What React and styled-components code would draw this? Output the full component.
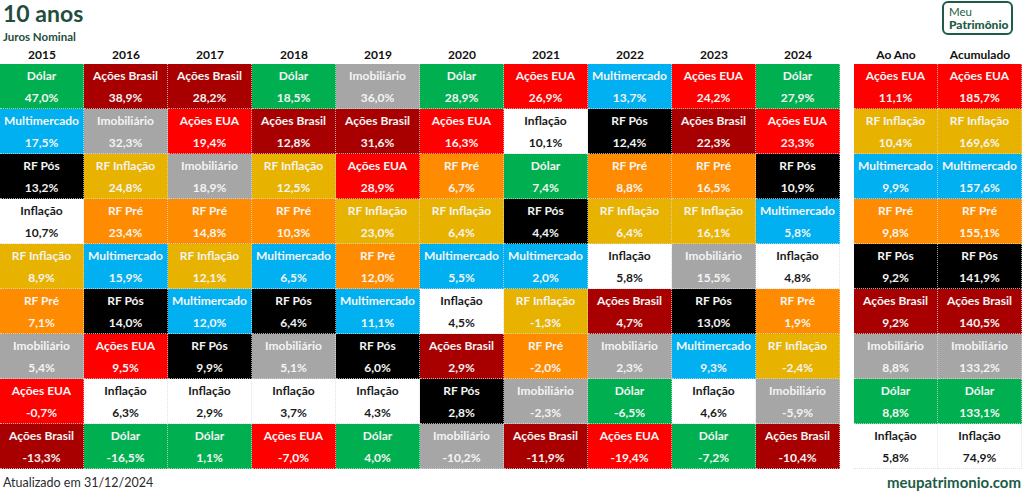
import React from 'react'
import styled, {createGlobalStyle} from 'styled-components'

const GlobalStyle = createGlobalStyle`
  html, body {
    margin: 0;
    padding: 0;
    background: #ffffff;
  }
  body {
    font-family: Lato, "Open Sans", sans-serif;
  }
`

const COLORS = {
    'Dólar': {bg: '#00b050', fg: '#f4f4f4'},
    'Ações Brasil': {bg: '#a80000', fg: '#f4f4f4'},
    'Ações EUA': {bg: '#ff0000', fg: '#f4f4f4'},
    'Imobiliário': {bg: '#a6a6a6', fg: '#f4f4f4'},
    'Multimercado': {bg: '#00b0f0', fg: '#f4f4f4'},
    'RF Pós': {bg: '#000000', fg: '#f4f4f4'},
    'RF Inflação': {bg: '#e8b200', fg: '#f4f4f4'},
    'RF Pré': {bg: '#ff8c00', fg: '#f4f4f4'},
    'Inflação': {bg: '#ffffff', fg: '#1a1a1a'},
}

const YEARS = ['2015', '2016', '2017', '2018', '2019', '2020', '2021', '2022', '2023', '2024']

// uma linha por posição do ranking, uma coluna por ano
const ROWS = [
    [['Dólar', '47,0%'], ['Ações Brasil', '38,9%'], ['Ações Brasil', '28,2%'], ['Dólar', '18,5%'], ['Imobiliário', '36,0%'], ['Dólar', '28,9%'], ['Ações EUA', '26,9%'], ['Multimercado', '13,7%'], ['Ações EUA', '24,2%'], ['Dólar', '27,9%']],
    [['Multimercado', '17,5%'], ['Imobiliário', '32,3%'], ['Ações EUA', '19,4%'], ['Ações Brasil', '12,8%'], ['Ações Brasil', '31,6%'], ['Ações EUA', '16,3%'], ['Inflação', '10,1%'], ['RF Pós', '12,4%'], ['Ações Brasil', '22,3%'], ['Ações EUA', '23,3%']],
    [['RF Pós', '13,2%'], ['RF Inflação', '24,8%'], ['Imobiliário', '18,9%'], ['RF Inflação', '12,5%'], ['Ações EUA', '28,9%'], ['RF Pré', '6,7%'], ['Dólar', '7,4%'], ['RF Pré', '8,8%'], ['RF Pré', '16,5%'], ['RF Pós', '10,9%']],
    [['Inflação', '10,7%'], ['RF Pré', '23,4%'], ['RF Pré', '14,8%'], ['RF Pré', '10,3%'], ['RF Inflação', '23,0%'], ['RF Inflação', '6,4%'], ['RF Pós', '4,4%'], ['RF Inflação', '6,4%'], ['RF Inflação', '16,1%'], ['Multimercado', '5,8%']],
    [['RF Inflação', '8,9%'], ['Multimercado', '15,9%'], ['RF Inflação', '12,1%'], ['Multimercado', '6,5%'], ['RF Pré', '12,0%'], ['Multimercado', '5,5%'], ['Multimercado', '2,0%'], ['Inflação', '5,8%'], ['Imobiliário', '15,5%'], ['Inflação', '4,8%']],
    [['RF Pré', '7,1%'], ['RF Pós', '14,0%'], ['Multimercado', '12,0%'], ['RF Pós', '6,4%'], ['Multimercado', '11,1%'], ['Inflação', '4,5%'], ['RF Inflação', '-1,3%'], ['Ações Brasil', '4,7%'], ['RF Pós', '13,0%'], ['RF Pré', '1,9%']],
    [['Imobiliário', '5,4%'], ['Ações EUA', '9,5%'], ['RF Pós', '9,9%'], ['Imobiliário', '5,1%'], ['RF Pós', '6,0%'], ['Ações Brasil', '2,9%'], ['RF Pré', '-2,0%'], ['Imobiliário', '2,3%'], ['Multimercado', '9,3%'], ['RF Inflação', '-2,4%']],
    [['Ações EUA', '-0,7%'], ['Inflação', '6,3%'], ['Inflação', '2,9%'], ['Inflação', '3,7%'], ['Inflação', '4,3%'], ['RF Pós', '2,8%'], ['Imobiliário', '-2,3%'], ['Dólar', '-6,5%'], ['Inflação', '4,6%'], ['Imobiliário', '-5,9%']],
    [['Ações Brasil', '-13,3%'], ['Dólar', '-16,5%'], ['Dólar', '1,1%'], ['Ações EUA', '-7,0%'], ['Dólar', '4,0%'], ['Imobiliário', '-10,2%'], ['Ações Brasil', '-11,9%'], ['Ações EUA', '-19,4%'], ['Dólar', '-7,2%'], ['Ações Brasil', '-10,4%']],
]

const SUMMARY = [
    [['Ações EUA', '11,1%'], ['Ações EUA', '185,7%']],
    [['RF Inflação', '10,4%'], ['RF Inflação', '169,6%']],
    [['Multimercado', '9,9%'], ['Multimercado', '157,6%']],
    [['RF Pré', '9,8%'], ['RF Pré', '155,1%']],
    [['RF Pós', '9,2%'], ['RF Pós', '141,9%']],
    [['Ações Brasil', '9,2%'], ['Ações Brasil', '140,5%']],
    [['Imobiliário', '8,8%'], ['Imobiliário', '133,2%']],
    [['Dólar', '8,8%'], ['Dólar', '133,1%']],
    [['Inflação', '5,8%'], ['Inflação', '74,9%']],
]

const Page = styled.div`
  width: 1024px;
  height: 495px;
  box-sizing: border-box;
  padding: 0 2px 0 0;
  display: flex;
  flex-direction: column;
  overflow: hidden;
`

const Top = styled.div`
  height: 44px;
  display: flex;
  justify-content: space-between;
  align-items: flex-start;
`

const TitleBlock = styled.div`
  display: flex;
  flex-direction: column;
  padding: 0 0 0 3px;
`

const Title = styled.h1`
  margin: 0;
  font-size: 23px;
  line-height: 26px;
  font-weight: 700;
  color: #1f4e3d;
`

const Subtitle = styled.div`
  margin-top: 4px;
  font-size: 11.5px;
  line-height: 13px;
  font-weight: 700;
  color: #1f4e3d;
`

const Logo = styled.div`
  margin: 1px 9px 0 0;
  width: 71px;
  height: 34px;
  box-sizing: border-box;
  border: 2px solid #1d5c46;
  border-radius: 6px;
  display: flex;
  flex-direction: column;
  justify-content: center;
  padding-left: 5px;
  color: #1d5c46;
  font-size: 11.5px;
  line-height: 13px;
  span:last-child {
    font-size: 12px;
    font-weight: 900;
  }
`

const Tables = styled.div`
  display: flex;
  gap: 14px;
`

const Grid = styled.div`
  display: grid;
  grid-template-columns: repeat(${p => p.$cols}, 84px);
  grid-template-rows: 20px repeat(9, 45px);
`

const Head = styled.div`
  display: flex;
  align-items: center;
  justify-content: center;
  font-size: 12px;
  font-weight: 700;
  color: #111;
`

const Cell = styled.div`
  box-sizing: border-box;
  background: ${p => p.$bg};
  color: ${p => p.$fg};
  border-right: 1px dotted rgba(220, 220, 220, 0.75);
  border-bottom: 1px dotted rgba(220, 220, 220, 0.75);
  display: flex;
  flex-direction: column;
  align-items: center;
  padding-top: 5px;
  gap: 8px;
  font-size: 12px;
  line-height: 14px;
  font-weight: 700;
  white-space: nowrap;
`

const Footer = styled.div`
  flex: 1;
  display: flex;
  justify-content: space-between;
  align-items: center;
  padding-left: 3px;
`

const Updated = styled.span`
  font-size: 12.5px;
  color: #2b2b2b;
`

const Site = styled.span`
  font-size: 15px;
  font-weight: 700;
  color: #1d5c46;
  margin-right: 1px;
`

const Entry = ({name, value}) => {
    const c = COLORS[name]
    return (
        <Cell $bg={c.bg} $fg={c.fg}>
            <span>{name}</span>
            <span>{value}</span>
        </Cell>
    )
}

export default function App() {
    return (
        <Page>
            <GlobalStyle/>
            <Top>
                <TitleBlock>
                    <Title>10 anos</Title>
                    <Subtitle>Juros Nominal</Subtitle>
                </TitleBlock>
                <Logo>
                    <span>Meu</span>
                    <span>Patrimônio</span>
                </Logo>
            </Top>
            <Tables>
                <Grid $cols={10}>
                    {YEARS.map(y => <Head key={y}>{y}</Head>)}
                    {ROWS.map((row, i) => row.map(([n, v], j) => <Entry key={i + '-' + j} name={n} value={v}/>))}
                </Grid>
                <Grid $cols={2}>
                    <Head>Ao Ano</Head>
                    <Head>Acumulado</Head>
                    {SUMMARY.map((row, i) => row.map(([n, v], j) => <Entry key={i + '-' + j} name={n} value={v}/>))}
                </Grid>
            </Tables>
            <Footer>
                <Updated>Atualizado em 31/12/2024</Updated>
                <Site>meupatrimonio.com</Site>
            </Footer>
        </Page>
    )
}
